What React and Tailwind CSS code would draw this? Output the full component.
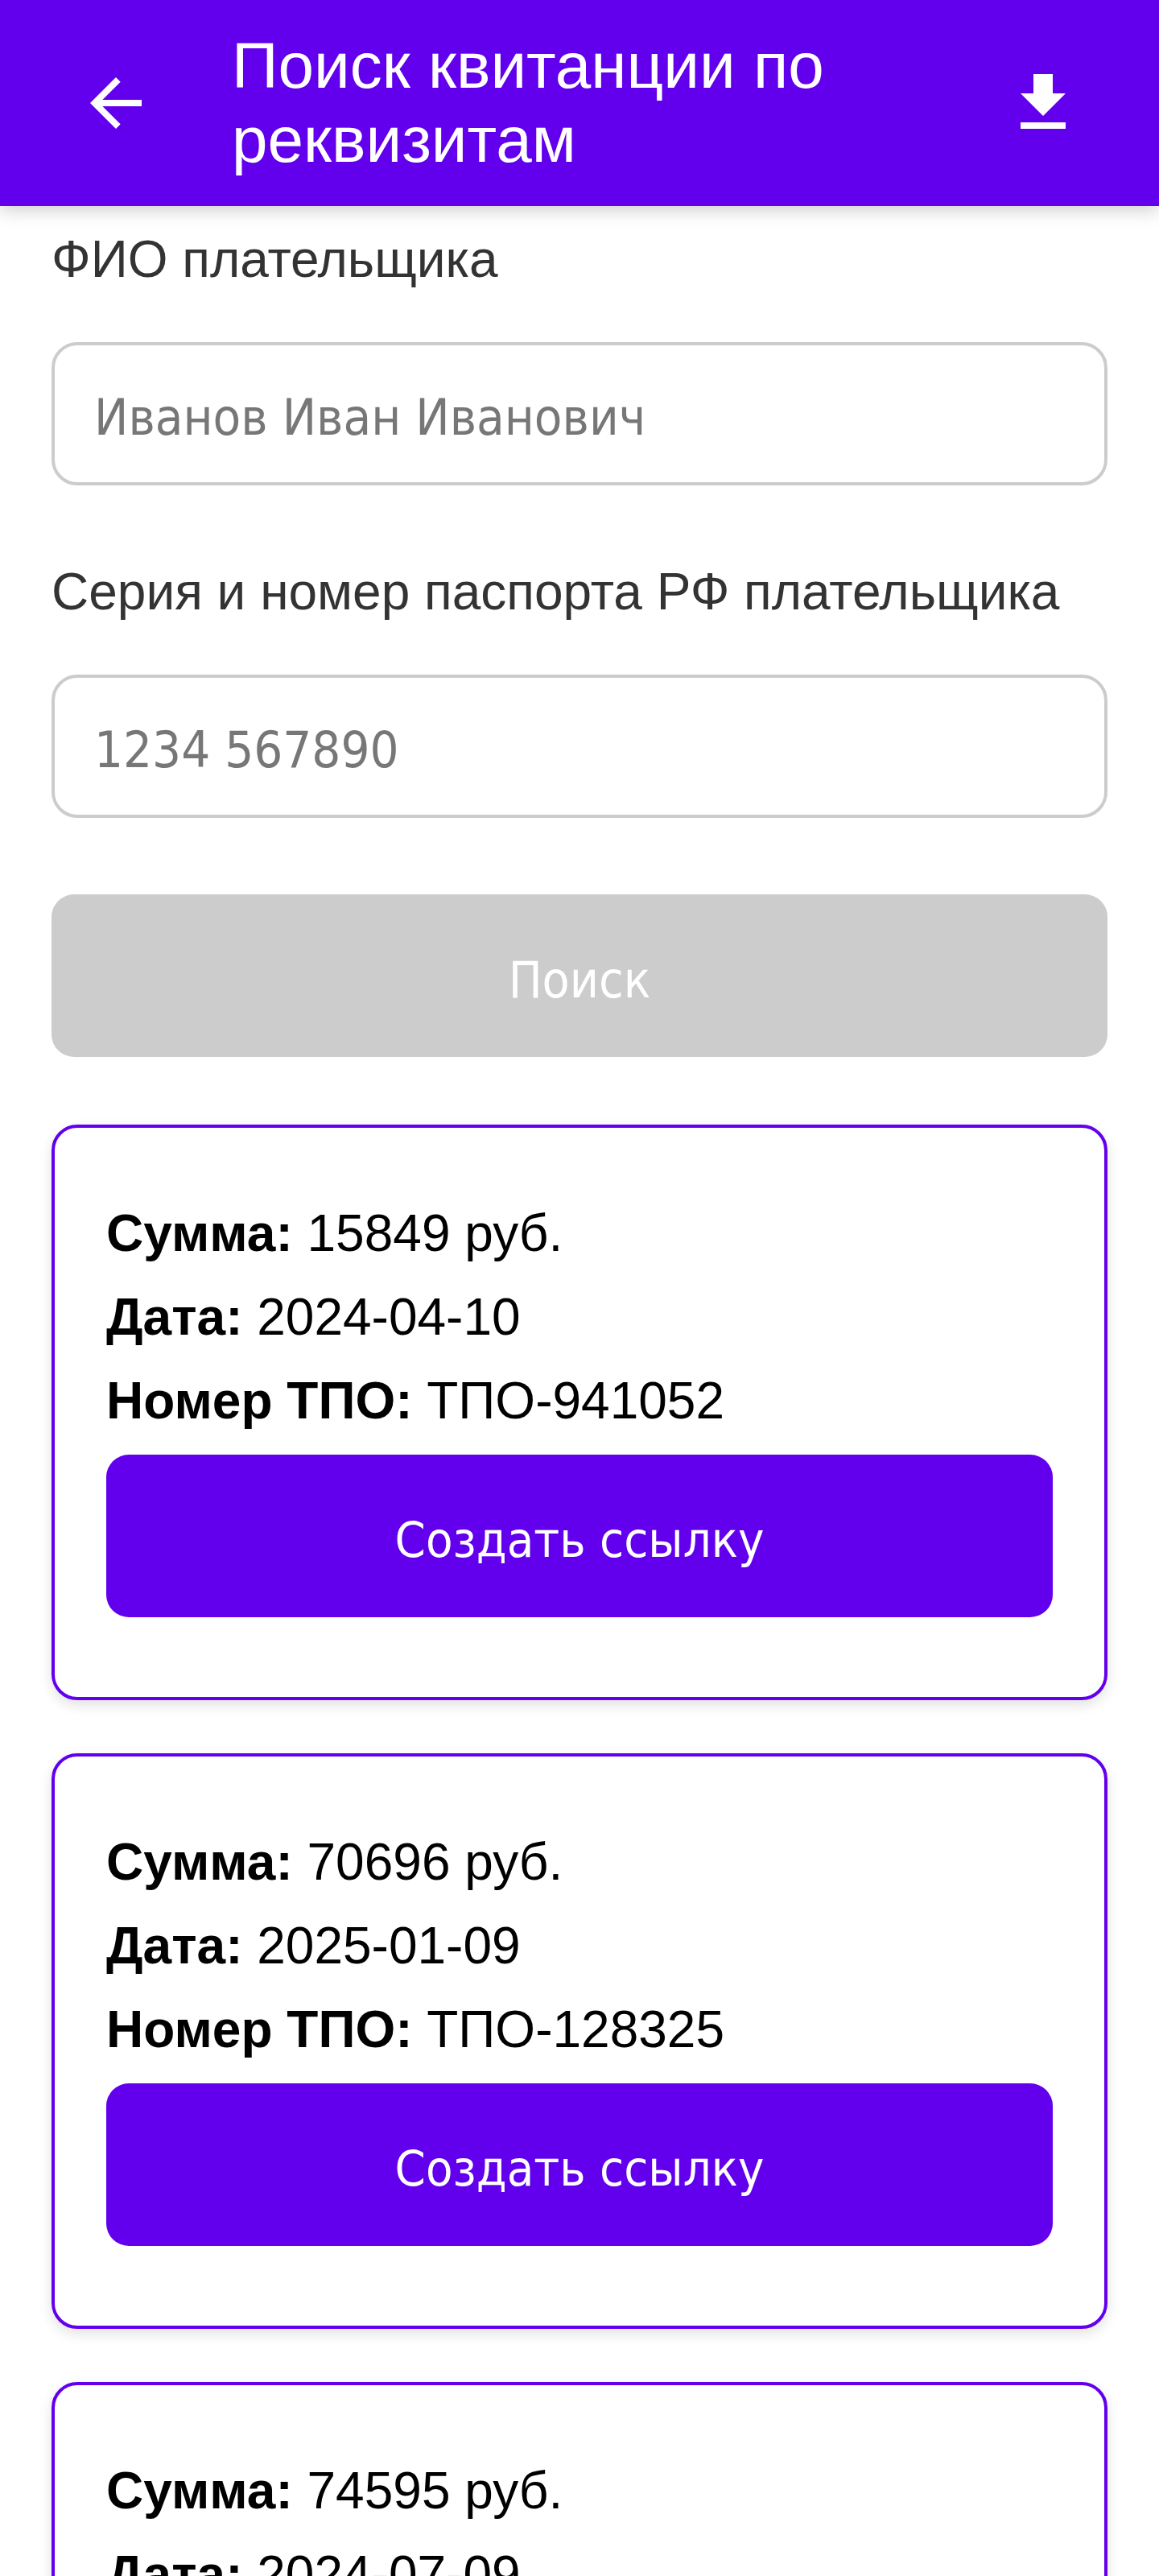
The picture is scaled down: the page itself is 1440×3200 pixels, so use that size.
import React from 'react';

const receipts = [
  { sum: 15849, date: '2024-04-10', tpo: 'ТПО-941052' },
  { sum: 70696, date: '2025-01-09', tpo: 'ТПО-128325' },
  { sum: 74595, date: '2024-07-09', tpo: 'ТПО-570413' },
];

const BackIcon = () => (
  <svg viewBox="0 0 24 24" className="h-[96px] w-[96px]" fill="white">
    <path d="M20 11H7.83l5.59-5.59L12 4l-8 8 8 8 1.41-1.41L7.83 13H20v-2z" />
  </svg>
);

const DownloadIcon = () => (
  <svg viewBox="0 0 24 24" className="h-[96px] w-[96px]" fill="white">
    <path d="M19 9h-4V3H9v6H5l7 7 7-7zM5 18v2h14v-2H5z" />
  </svg>
);

const Field = ({ label, placeholder, className }) => (
  <div className={className}>
    <label className="block text-[64px] leading-[74px] text-[#333333]">{label}</label>
    <input
      placeholder={placeholder}
      className="mt-[66px] block h-[178px] w-full rounded-[32px] border-[4px] border-[#cccccc] bg-white pt-[8px] pl-[49px] pr-[44px] font-['DejaVu_Sans_Condensed','DejaVu_Sans',sans-serif] text-[63px] text-[#333] outline-none placeholder:text-[#777777]"
    />
  </div>
);

const ReceiptCard = ({ sum, date, tpo }) => (
  <div className="rounded-[32px] border-[4px] border-[#6200ee] bg-white px-[64px] pt-[79px] pb-[99px] shadow-[0_6px_16px_rgba(0,0,0,0.12)]">
    <div className="text-[64px] leading-[104px] text-black">
      <p><span className="font-bold">Сумма:</span> {sum} руб.</p>
      <p><span className="font-bold">Дата:</span> {date}</p>
      <p><span className="font-bold">Номер ТПО:</span> {tpo}</p>
    </div>
    <button className="mt-[15px] flex h-[202px] w-full items-center justify-center rounded-[28px] bg-[#6200ee] pt-[10px] font-['DejaVu_Sans_Condensed','DejaVu_Sans',sans-serif] text-[61px] text-white">
      Создать ссылку
    </button>
  </div>
);

export default function App() {
  return (
    <div className="min-h-[3200px] bg-white font-['Liberation_Sans',Arial,sans-serif]">
      <header className="relative z-10 flex h-[256px] items-center bg-[#6200ee] pl-[96px] pr-[96px] shadow-[0_6px_20px_rgba(0,0,0,0.18)]">
        <BackIcon />
        <h1 className="ml-[96px] flex-1 text-[80px] leading-[92px] text-white">
          Поиск квитанции по<br />реквизитам
        </h1>
        <DownloadIcon />
      </header>

      <main className="px-[64px] pt-[29px]">
        <Field label="ФИО плательщика" placeholder="Иванов Иван Иванович" />
        <Field
          className="mt-[95px]"
          label="Серия и номер паспорта РФ плательщика"
          placeholder="1234 567890"
        />
        <button className="mt-[95px] flex h-[202px] w-full items-center justify-center rounded-[28px] bg-[#cccccc] pt-[10px] font-['DejaVu_Sans_Condensed','DejaVu_Sans',sans-serif] text-[62px] text-white">
          Поиск
        </button>

        <div className="mt-[84px] flex flex-col gap-[66px] pb-[64px]">
          {receipts.map((r) => (
            <ReceiptCard key={r.tpo} {...r} />
          ))}
        </div>
      </main>
    </div>
  );
}
